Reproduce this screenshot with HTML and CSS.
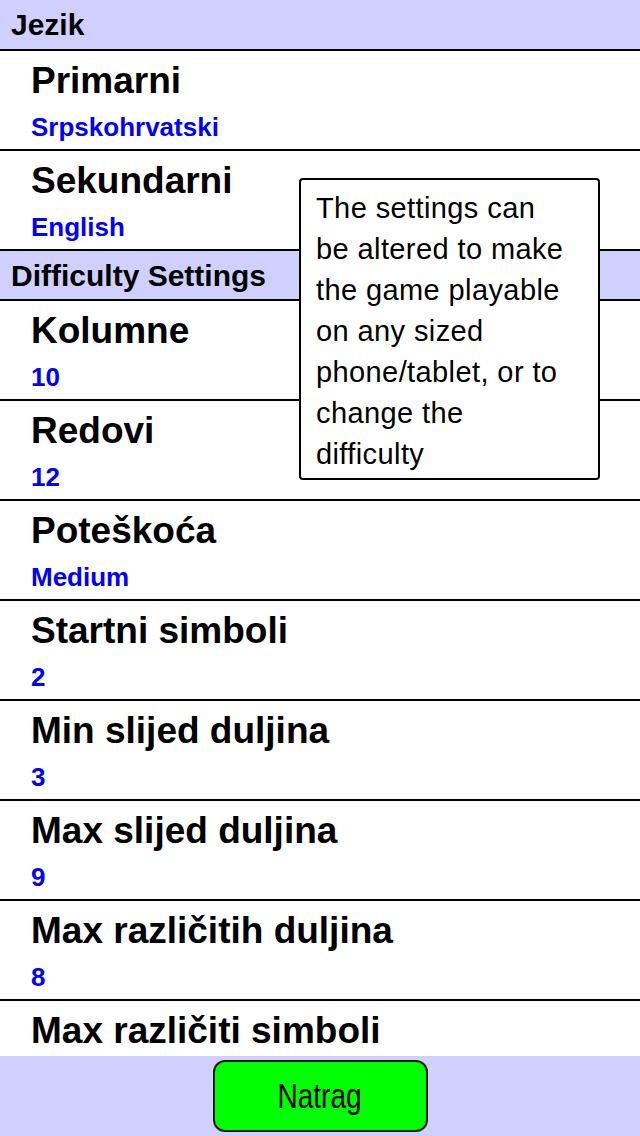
FILE: index.html
```html
<!DOCTYPE html>
<html>
<head>
<meta charset="utf-8">
<link rel="stylesheet" href="styles.css">
</head>
<body>
<div class="screen">
  <div class="list">
    <div class="section first">Jezik</div>
    <div class="item"><div class="title">Primarni</div><div class="value">Srpskohrvatski</div></div>
    <div class="item"><div class="title">Sekundarni</div><div class="value">English</div></div>
    <div class="section">Difficulty Settings</div>
    <div class="item"><div class="title">Kolumne</div><div class="value">10</div></div>
    <div class="item"><div class="title">Redovi</div><div class="value">12</div></div>
    <div class="item"><div class="title">Poteškoća</div><div class="value">Medium</div></div>
    <div class="item"><div class="title">Startni simboli</div><div class="value">2</div></div>
    <div class="item"><div class="title">Min slijed duljina</div><div class="value">3</div></div>
    <div class="item"><div class="title">Max slijed duljina</div><div class="value">9</div></div>
    <div class="item"><div class="title">Max različitih duljina</div><div class="value">8</div></div>
    <div class="item last"><div class="title">Max različiti simboli</div></div>
  </div>
  <div class="footer">
    <button class="back"><span class="back-label">Natrag</span></button>
  </div>
  <div class="tooltip">The settings can be altered to make the game playable on any sized phone/tablet, or to change the difficulty</div>
</div>
</body>
</html>
```

FILE: styles.css
```css
html, body {
  margin: 0;
  padding: 0;
  background: #fff;
}
.screen {
  position: relative;
  width: 640px;
  height: 1136px;
  display: flex;
  flex-direction: column;
  overflow: hidden;
  font-family: "Liberation Sans", Arial, sans-serif;
}
.list {
  flex: 1;
  overflow: hidden;
  display: flex;
  flex-direction: column;
}
.section {
  flex: none;
  height: 48px;
  background: #d0d0ff;
  border-bottom: 2px solid #000;
  padding-left: 11px;
  font-weight: bold;
  font-size: 30px;
  line-height: 50px;
  color: #000;
  box-sizing: content-box;
}
.section.first {
  height: 49px;
  line-height: 49px;
}
.item {
  flex: none;
  height: 100px;
  border-bottom: 2px solid #000;
  padding: 9px 0 0 31px;
  box-sizing: border-box;
}
.title {
  font-weight: bold;
  font-size: 37px;
  line-height: 42px;
  color: #000;
}
.value {
  margin-top: 5px;
  font-weight: bold;
  font-size: 26px;
  line-height: 40px;
  color: #0000ff;
}
.footer {
  flex: none;
  height: 80px;
  background: #d0d0ff;
  display: flex;
  justify-content: center;
  align-items: flex-start;
  padding-top: 4px;
  box-sizing: border-box;
}
.back {
  width: 215px;
  height: 72px;
  background: #00ff00;
  border: 2px solid #1a1a1a;
  border-radius: 12px;
  font-family: "Liberation Sans", Arial, sans-serif;
  font-size: 35px;
  color: #000;
  padding: 0;
  display: flex;
  align-items: center;
  justify-content: center;
}
.back-label {
  display: inline-block;
  transform: scaleX(0.8);
}
.tooltip {
  position: absolute;
  left: 299px;
  top: 178px;
  width: 301px;
  height: 302px;
  box-sizing: border-box;
  background: #fff;
  border: 2px solid #000;
  border-radius: 4px;
  padding: 8px 28px 0 15px;
  font-size: 29px;
  line-height: 41px;
  letter-spacing: 0.4px;
  color: #000;
}
```
